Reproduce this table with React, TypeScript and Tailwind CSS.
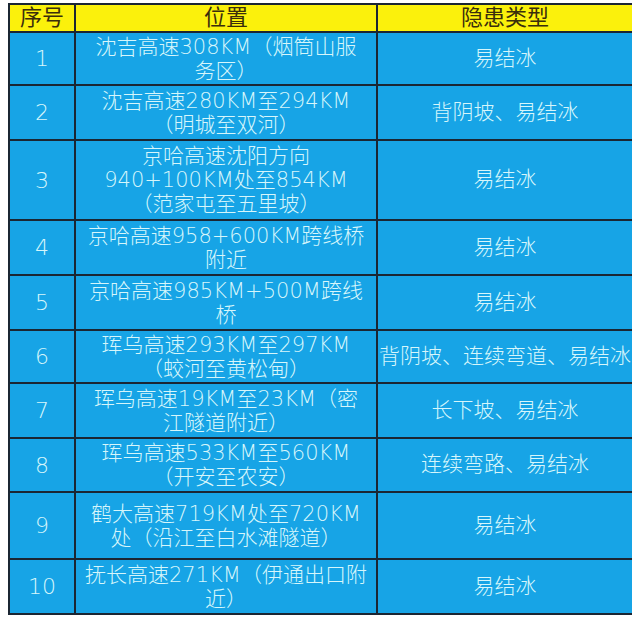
import React from 'react'

type Row = {
    no: string
    place: string[]
    risk: string
    h: string
}

const rows: Row[] = [
    { no: '1', place: ['沈吉高速308KM（烟筒山服', '务区）'], risk: '易结冰', h: 'h-[51px]' },
    { no: '2', place: ['沈吉高速280KM至294KM', '（明城至双河）'], risk: '背阴坡、易结冰', h: 'h-[53px]' },
    { no: '3', place: ['京哈高速沈阳方向', '940+100KM处至854KM', '（范家屯至五里坡）'], risk: '易结冰', h: 'h-[78px]' },
    { no: '4', place: ['京哈高速958+600KM跨线桥', '附近'], risk: '易结冰', h: 'h-[53px]' },
    { no: '5', place: ['京哈高速985KM+500M跨线', '桥'], risk: '易结冰', h: 'h-[53px]' },
    { no: '6', place: ['珲乌高速293KM至297KM', '（蛟河至黄松甸）'], risk: '背阴坡、连续弯道、易结冰', h: 'h-[51px]' },
    { no: '7', place: ['珲乌高速19KM至23KM（密', '江隧道附近）'], risk: '长下坡、易结冰', h: 'h-[53px]' },
    { no: '8', place: ['珲乌高速533KM至560KM', '（开安至农安）'], risk: '连续弯路、易结冰', h: 'h-[52px]' },
    { no: '9', place: ['鹤大高速719KM处至720KM', '处（沿江至白水滩隧道）'], risk: '易结冰', h: 'h-[65px]' },
    { no: '10', place: ['抚长高速271KM（伊通出口附', '近）'], risk: '易结冰', h: 'h-[53px]' },
]

function App() {
    return (
        <div className="w-[640px] h-[620px] bg-white pt-[3px] pl-[8px] font-['DejaVu_Sans','Noto_Sans_CJK_SC',sans-serif] font-extralight">
            <div className="w-[624px] bg-[#1b2633] p-[2px] grid grid-cols-[64px_300px_254px] gap-[2px]">
                {/* 表头 */}
                <div className="h-[26px] bg-[#fbf10c] text-[#3a2e0c] text-[22px] leading-none flex items-center justify-center font-normal">序号</div>
                <div className="h-[26px] bg-[#fbf10c] text-[#3a2e0c] text-[22px] leading-none flex items-center justify-center font-normal">位置</div>
                <div className="h-[26px] bg-[#fbf10c] text-[#3a2e0c] text-[22px] leading-none flex items-center justify-center font-normal">隐患类型</div>

                {rows.map((r) => (
                    <React.Fragment key={r.no}>
                        <div className={`${r.h} bg-[#17a4e6] text-[#d6f6fb] text-[22px] flex items-center justify-center`}>
                            {r.no}
                        </div>
                        <div className={`${r.h} bg-[#17a4e6] text-[#d6f6fb] text-[21px] leading-[24px] flex flex-col items-center justify-center whitespace-nowrap overflow-hidden`}>
                            {r.place.map((l, i) => (
                                <span key={i}>{l}</span>
                            ))}
                        </div>
                        <div className={`${r.h} bg-[#17a4e6] text-[#d6f6fb] text-[21px] flex items-center justify-center whitespace-nowrap overflow-hidden`}>
                            {r.risk}
                        </div>
                    </React.Fragment>
                ))}
            </div>
        </div>
    )
}

export default App
